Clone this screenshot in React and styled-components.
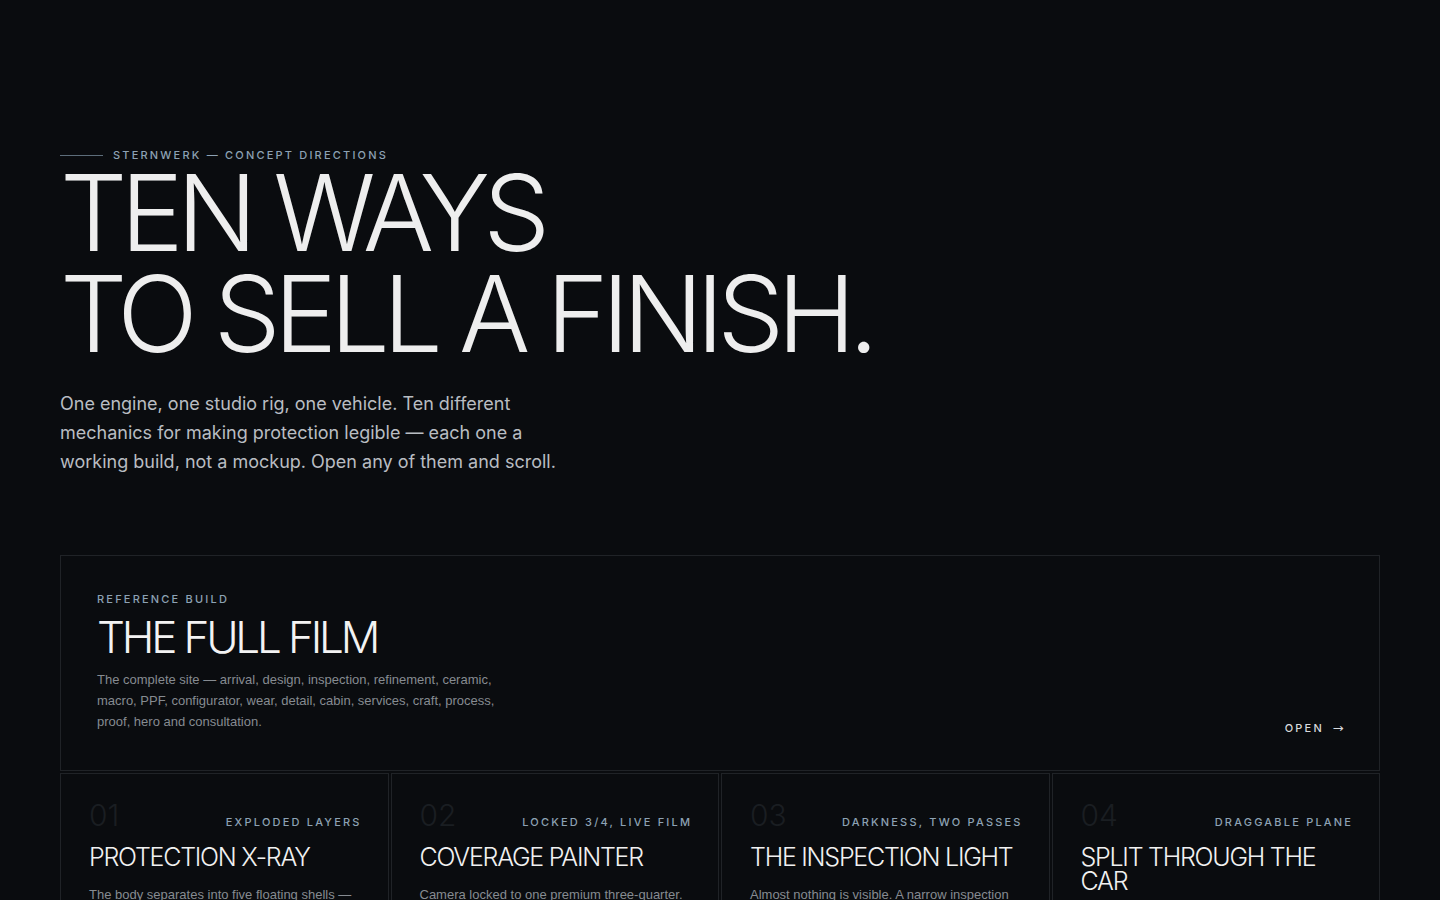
import React from "react";
import styled, { createGlobalStyle } from "styled-components";

const Global = createGlobalStyle`
  html, body { margin: 0; padding: 0; background: #0a0c0f; }
  body {
    font-family: Inter, "Noto Sans", sans-serif;
    color: #ececec;
    -webkit-font-smoothing: antialiased;
  }
  * { box-sizing: border-box; }
`;

const Page = styled.main`
  padding: 147px 60px 80px;
  min-height: 100vh;
  background: #0a0c0f;
`;

const Eyebrow = styled.div`
  display: flex;
  align-items: center;
  gap: 10px;
  font-size: 11px;
  line-height: 16px;
  font-weight: 500;
  letter-spacing: 0.2em;
  text-transform: uppercase;
  color: #8da2b4;
  &::before {
    content: "";
    display: block;
    width: 43px;
    height: 1px;
    background: #5d6d7a;
  }
`;

const Headline = styled.h1`
  margin: 0;
  font-size: 106px;
  line-height: 0.95;
  font-weight: 300;
  letter-spacing: -0.065em;
  color: #eeeeee;
  text-transform: uppercase;
`;

const Lede = styled.p`
  margin: 26px 0 0;
  max-width: 520px;
  font-size: 18px;
  line-height: 1.6;
  font-weight: 400;
  color: #b9bdc2;
`;

const Feature = styled.a`
  margin-top: 78px;
  display: flex;
  justify-content: space-between;
  align-items: flex-end;
  padding: 35px 36px 38px;
  border: 1px solid #202327;
  color: inherit;
  text-decoration: none;
`;

const Label = styled.div`
  font-size: 11px;
  line-height: 16px;
  font-weight: 500;
  letter-spacing: 0.2em;
  margin-right: -0.2em;
  text-transform: uppercase;
  color: ${(p) => p.$tone || "#8da2b4"};
`;

const FeatureTitle = styled.h2`
  margin: 8px 0 0;
  font-size: 44px;
  line-height: 1;
  font-weight: 300;
  letter-spacing: -0.072em;
  color: #f3f3f3;
`;

const Desc = styled.p`
  margin: ${(p) => p.$mt || "10px"} 0 0;
  max-width: ${(p) => p.$max || "420px"};
  font-family: "Liberation Sans", Arial, sans-serif;
  font-size: 13px;
  line-height: 21px;
  color: #868b91;
`;

const Open = styled.span`
  display: flex;
  align-items: center;
  gap: 9px;
  margin-bottom: -4px;
  font-size: 11px;
  line-height: 16px;
  font-weight: 500;
  letter-spacing: 0.2em;
  color: #d8dadc;
  white-space: nowrap;
`;

const Arrow = styled.span`
  font-family: "DejaVu Sans", sans-serif;
  font-size: 12px;
  letter-spacing: 0;
  transform: scaleX(1.1);
`;

const Grid = styled.div`
  margin-top: 2px;
  display: grid;
  grid-template-columns: repeat(4, 1fr);
  gap: 2px;
`;

const Card = styled.a`
  display: flex;
  flex-direction: column;
  padding: 26px 28px 32px;
  border: 1px solid #202327;
  min-height: 300px;
  color: inherit;
  text-decoration: none;
`;

const CardTop = styled.div`
  display: flex;
  justify-content: space-between;
  align-items: baseline;
`;

const Num = styled.span`
  font-size: 30px;
  line-height: 1;
  font-weight: 300;
  color: #1a1e22;
`;

const CardTitle = styled.h3`
  margin: 16px 0 0;
  font-size: 25px;
  line-height: 0.95;
  font-weight: 300;
  letter-spacing: -0.05em;
  color: #f1f1f1;
  text-transform: uppercase;
`;

const directions = [
  {
    n: "01",
    tag: "Exploded layers",
    title: "Protection X-Ray",
    desc: "The body separates into five floating shells — clear coat, film, ceramic, paint and primer — each one labelled as it drifts apart.",
  },
  {
    n: "02",
    tag: "Locked 3/4, live film",
    title: "Coverage Painter",
    desc: "Camera locked to one premium three-quarter. Scrolling paints film across the panels as each package is described.",
  },
  {
    n: "03",
    tag: "Darkness, two passes",
    title: "The Inspection Light",
    desc: "Almost nothing is visible. A narrow inspection beam sweeps the body twice — once before, once after the correction.",
  },
  {
    n: "04",
    tag: "Draggable plane",
    title: "Split Through the Car",
    desc: "A single vertical plane cuts the vehicle in half: untreated on one side, finished on the other. Drag it to compare.",
  },
  {
    n: "05",
    tag: "Macro drift",
    title: "Surface at 40×",
    desc: "A slow macro camera travels across swirl marks, orange peel and chips, then across the same panel after work.",
  },
  {
    n: "06",
    tag: "Weather loop",
    title: "Rain Test",
    desc: "Water beads, sheets and runs off the ceramic while the untreated side holds every drop.",
  },
  {
    n: "07",
    tag: "Timeline",
    title: "Five Years Later",
    desc: "Scrub through time and watch the finish age — with and without protection.",
  },
  {
    n: "08",
    tag: "Build your own",
    title: "The Configurator",
    desc: "Choose coverage, film and coating; the car updates in place and the quote follows.",
  },
];

export default function App() {
  return (
    <>
      <Global />
      <Page>
        <Eyebrow>Sternwerk — Concept Directions</Eyebrow>
        <Headline>
          Ten ways
          <br />
          to sell a finish.
        </Headline>
        <Lede>
          One engine, one studio rig, one vehicle. Ten different mechanics for
          making protection legible — each one a working build, not a mockup.
          Open any of them and scroll.
        </Lede>

        <Feature href="#">
          <div>
            <Label>Reference build</Label>
            <FeatureTitle>THE FULL FILM</FeatureTitle>
            <Desc>
              The complete site — arrival, design, inspection, refinement,
              ceramic, macro, PPF, configurator, wear, detail, cabin, services,
              craft, process, proof, hero and consultation.
            </Desc>
          </div>
          <Open>
            OPEN<Arrow>→</Arrow>
          </Open>
        </Feature>

        <Grid>
          {directions.map((d) => (
            <Card href="#" key={d.n}>
              <CardTop>
                <Num>{d.n}</Num>
                <Label>{d.tag}</Label>
              </CardTop>
              <CardTitle>{d.title}</CardTitle>
              <Desc $mt="14px" $max="100%">
                {d.desc}
              </Desc>
            </Card>
          ))}
        </Grid>
      </Page>
    </>
  );
}
